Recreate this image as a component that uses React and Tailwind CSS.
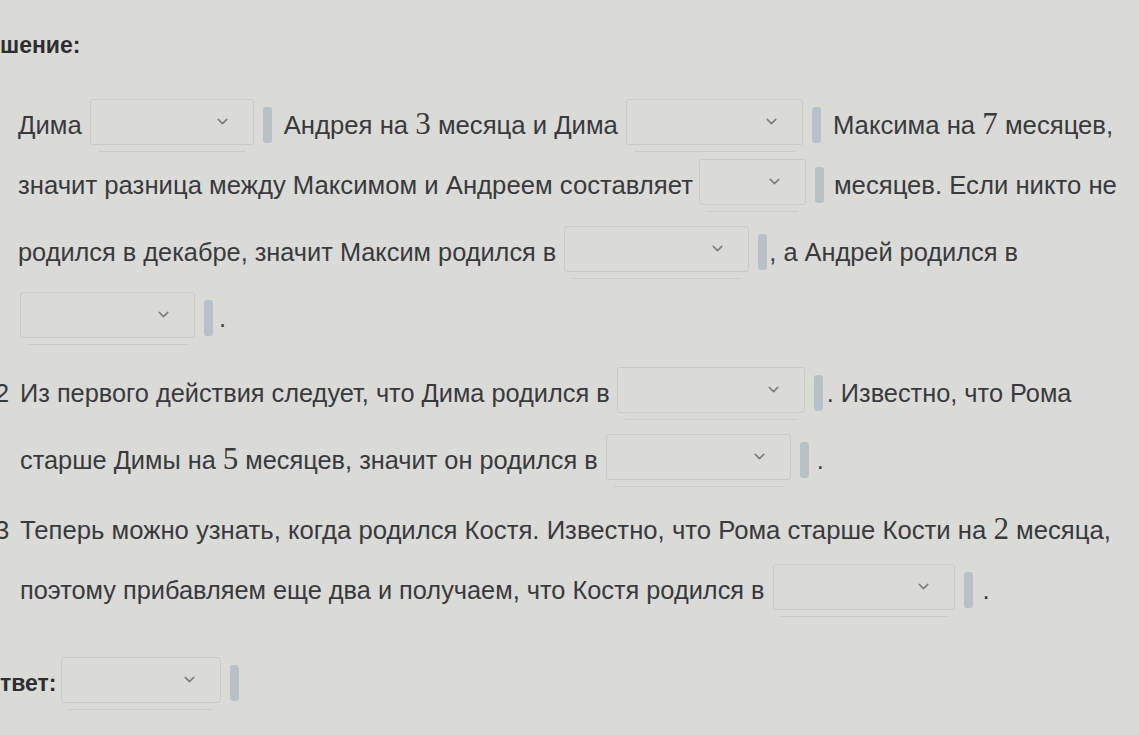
import { ChevronDown } from "lucide-react";

function Pick({ w }) {
  return (
    <div className="flex shrink-0 flex-col">
      <div
        className={`flex h-[46px] items-center justify-end rounded-[3px] border border-[#c8cac6] pr-[22px] ${w}`}
      >
        <ChevronDown size={17} strokeWidth={2.2} className="text-[#7c7e7e]" />
      </div>
      <div className="mx-[8px] mt-[6px] h-px bg-[#cacbc7]" />
    </div>
  );
}

function Bar({ after = "mr-[10px]" }) {
  return <span className={`ml-[9px] h-[36px] w-[9px] shrink-0 rounded-[3px] bg-[#b7c1c8] ${after}`} />;
}

function Num({ children }) {
  return <span className="font-['Liberation_Serif',serif] text-[31px] leading-none">{children}</span>;
}

function Row({ children, top, className = "" }) {
  return (
    <div className={`flex h-[56px] items-center whitespace-nowrap ${top} ${className}`}>{children}</div>
  );
}

export default function App() {
  return (
    <div className="min-h-[735px] w-[1139px] overflow-hidden bg-[#dadbd6] pt-[25px] font-['Liberation_Sans',Arial,sans-serif] text-[25.7px] text-[#383a3d]">
      <div className="flex h-[40px] items-center text-[23px] font-bold text-[#2c2e30]">шение:</div>

      <div className="pl-[18px]">
        <Row top="mt-[32px]">
          <span className="mr-[8px]">Дима</span>
          <Pick w="w-[164px]" />
          <Bar after="mr-[12px]" />
          <span>
            Андрея на <Num>3</Num> месяца и Дима
          </span>
          <span className="ml-[8px]" />
          <Pick w="w-[177px]" />
          <Bar after="mr-[12px]" />
          <span>
            Максима на <Num>7</Num> месяцев,
          </span>
        </Row>

        <Row top="mt-[4px]">
          <span className="mr-[6px]">значит разница между Максимом и Андреем составляет</span>
          <Pick w="w-[107px]" />
          <Bar after="mr-[10px]" />
          <span>месяцев. Если никто не</span>
        </Row>

        <Row top="mt-[11px]" className="text-[25.35px]">
          <span className="mr-[8px]">родился в декабре, значит Максим родился в</span>
          <Pick w="w-[185px]" />
          <Bar after="mr-[2px]" />
          <span>, а Андрей родился в</span>
        </Row>

        <Row top="mt-[10px]">
          <span className="ml-[2px]" />
          <Pick w="w-[175px]" />
          <Bar after="mr-[6px]" />
          <span>.</span>
        </Row>
      </div>

      <Row top="mt-[19px]" className="text-[25.35px]">
        <span className="-ml-[5px] w-[25px]">2</span>
        <span className="mr-[7px]">Из первого действия следует, что Дима родился в</span>
        <Pick w="w-[188px]" />
        <Bar after="mr-[4px]" />
        <span>. Известно, что Рома</span>
      </Row>

      <Row top="mt-[11px]" className="pl-[20px] text-[25.35px]">
        <span className="mr-[8px]">
          старше Димы на <Num>5</Num> месяцев, значит он родился в
        </span>
        <Pick w="w-[185px]" />
        <Bar after="mr-[8px]" />
        <span>.</span>
      </Row>

      <Row top="mt-[14px]">
        <span className="-ml-[5px] w-[25px]">3</span>
        <span>
          Теперь можно узнать, когда родился Костя. Известно, что Рома старше Кости на <Num>2</Num> месяца,
        </span>
      </Row>

      <Row top="mt-[4px]" className="pl-[20px] text-[25.35px]">
        <span className="mr-[8px]">поэтому прибавляем еще два и получаем, что Костя родился в</span>
        <Pick w="w-[182px]" />
        <Bar after="mr-[10px]" />
        <span>.</span>
      </Row>

      <Row top="mt-[37px]">
        <span className="mr-[4px] text-[23px] font-bold text-[#2c2e30]">твет:</span>
        <Pick w="w-[160px]" />
        <Bar />
      </Row>
    </div>
  );
}
